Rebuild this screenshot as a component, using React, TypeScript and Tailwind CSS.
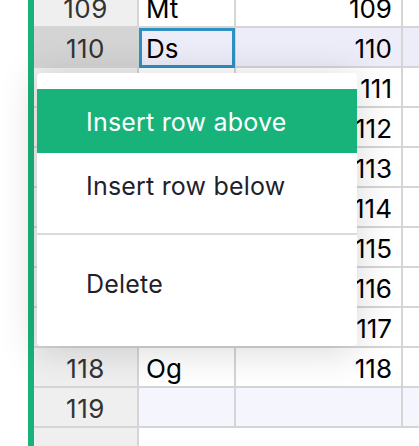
import React from "react";

const rows: { n: string; s: string; v: string; sel?: boolean; hl?: boolean }[] = [
  { n: "109", s: "Mt", v: "109" },
  { n: "110", s: "Ds", v: "110", sel: true },
  { n: "111", s: "Rg", v: "111" },
  { n: "112", s: "Cn", v: "112" },
  { n: "113", s: "Nh", v: "113" },
  { n: "114", s: "Fl", v: "114" },
  { n: "115", s: "Mc", v: "115" },
  { n: "116", s: "Lv", v: "116" },
  { n: "117", s: "Ts", v: "117" },
  { n: "118", s: "Og", v: "118" },
  { n: "119", s: "", v: "", hl: true },
];

export default function App() {
  return (
    <div
      className="relative w-[419px] h-[446px] overflow-hidden bg-white flex"
      style={{ fontFamily: "Inter, 'Liberation Sans', sans-serif" }}
    >
      <div className="w-[28px] shrink-0" />
      <div className="w-[6px] shrink-0 bg-[#18b37a]" />
      <div className="flex-1 flex flex-col -mt-[12px]">
        {rows.map((r) => {
          const rowBg = r.sel ? "bg-[#ededfa]" : r.hl ? "bg-[#f5f5fe]" : "bg-white";
          return (
            <div key={r.n} className="flex h-[40px] shrink-0 text-[26px] leading-none">
              <div
                className={`w-[105px] shrink-0 flex items-center justify-center pt-[3px] border-r-2 border-b-2 border-[#d5d5d5] text-[#333] tracking-[0.5px] ${
                  r.sel ? "bg-[#d4d4d4]" : "bg-[#efefef]"
                }`}
              >
                {r.n}
              </div>
              <div
                className={`relative w-[97px] shrink-0 flex items-center pl-[7px] pt-[3px] border-r-2 border-b-2 border-[#d5d5d5] text-black ${rowBg}`}
              >
                {r.s}
                {r.sel && (
                  <div className="absolute left-0 top-0 right-[-1px] bottom-[-2px] border-[3px] border-[#2f8fc3]" />
                )}
              </div>
              <div
                className={`w-[167px] shrink-0 flex items-center justify-end pr-[9px] pt-[3px] border-r-2 border-b-2 border-[#d5d5d5] text-black ${rowBg}`}
              >
                {r.v}
              </div>
              <div className={`flex-1 border-b-2 border-[#d5d5d5] ${rowBg}`} />
            </div>
          );
        })}
        <div className="flex h-[40px] shrink-0">
          <div className="w-[105px] shrink-0 border-r-2 border-[#d5d5d5] bg-[#efefef]" />
          <div className="flex-1 bg-white" />
        </div>
      </div>

      <div className="absolute left-[37px] top-[73px] w-[320px] h-[273px] bg-white rounded-[4px] shadow-[0_4px_40px_rgba(0,0,0,0.16)] pt-[16px] text-[25px] tracking-[0.2px] text-[#1f1f2e]">
        <div className="h-[64px] bg-[#18b37a] text-white flex items-center pl-[49px] pt-[3px]">Insert row above</div>
        <div className="h-[64px] flex items-center pl-[49px] pt-[3px]">Insert row below</div>
        <div className="mt-[16px] h-[2px] bg-[#dadada]" />
        <div className="mt-[16px] h-[64px] flex items-center pl-[49px] pt-[3px]">Delete</div>
      </div>
    </div>
  );
}
